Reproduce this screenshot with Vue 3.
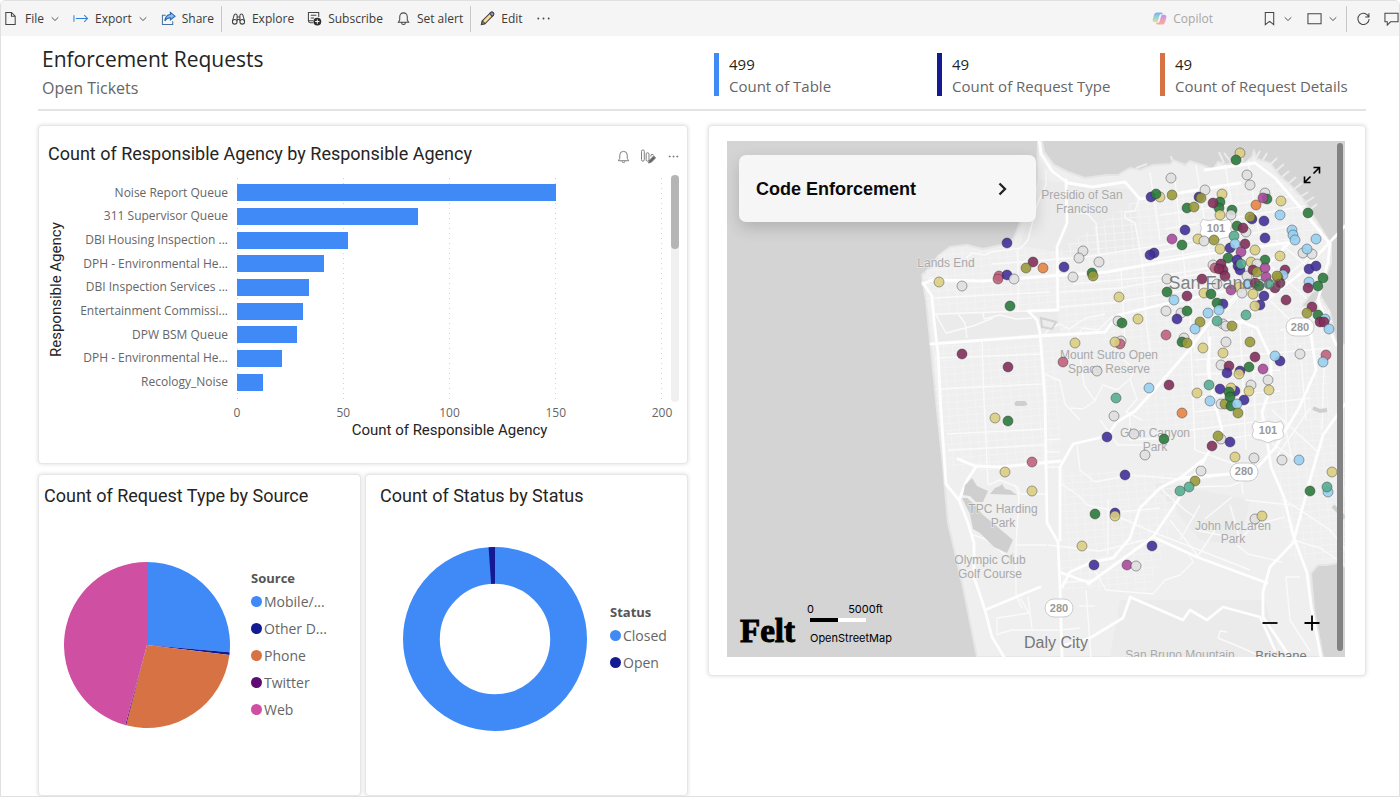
<script setup>
const kpis = [
  { value: '499', label: 'Count of Table', tone: 'blue' },
  { value: '49', label: 'Count of Request Type', tone: 'navy' },
  { value: '49', label: 'Count of Request Details', tone: 'orange' }
]

const agencies = [
  { name: 'Noise Report Queue', count: 150 },
  { name: '311 Supervisor Queue', count: 85 },
  { name: 'DBI Housing Inspection ...', count: 52 },
  { name: 'DPH - Environmental He...', count: 41 },
  { name: 'DBI Inspection Services ...', count: 34 },
  { name: 'Entertainment Commissi...', count: 31 },
  { name: 'DPW BSM Queue', count: 28 },
  { name: 'DPH - Environmental He...', count: 21 },
  { name: 'Recology_Noise', count: 12 }
]
const ticks = [0, 50, 100, 150, 200]

const sources = [
  { name: 'Mobile/...', color: '#3f8af7', from: 0, to: 95 },
  { name: 'Other D...', color: '#141b92', from: 95, to: 97 },
  { name: 'Phone', color: '#d67244', from: 97, to: 194.5 },
  { name: 'Twitter', color: '#5f0b74', from: 194.5, to: 195.2 },
  { name: 'Web', color: '#cf4fa2', from: 195.2, to: 360 }
]
const statuses = [
  { name: 'Closed', color: '#3f8af7' },
  { name: 'Open', color: '#141b92' }
]

function point(angle, radius) {
  const a = ((angle - 90) * Math.PI) / 180
  return `${(100 + radius * Math.cos(a)).toFixed(2)} ${(100 + radius * Math.sin(a)).toFixed(2)}`
}
function slice(from, to) {
  const large = to - from > 180 ? 1 : 0
  return `M100 100 L${point(from, 100)} A100 100 0 ${large} 1 ${point(to, 100)} Z`
}
function ring(from, to) {
  return `M${point(from, 100)} A100 100 0 0 1 ${point(to, 100)} L${point(to, 60)} A60 60 0 0 0 ${point(from, 60)} Z`
}

const palette = {
  n: '#42309a', y: '#dace82', w: '#dfdfdf', g: '#2b7a3c', o: '#9b9a3b', m: '#822f5a',
  t: '#58ad92', b: '#98cfef', r: '#c0627c', p: '#a74b9c', O: '#e58444'
}
const requests = `
n 1007 243,r 999 276,m 1033 262,o 1026 268,O 1043 268,r 998 279,n 1007 275,w 1014 279,y 939 282,w 962 286,g 1010 306,m 962 354,m 1008 367,
w 1171 178,n 1151 197,y 1160 197,g 1156 194,o 1172 195,n 1199 197,g 1187 208,o 1194 207,n 1185 230,p 1172 239,g 1182 245,y 1198 239,
w 1083 251,w 1079 258,w 1099 262,n 1064 267,w 1073 277,g 1092 273,o 1093 276,n 1154 253,n 1150 255,w 1167 279,g 1167 292,b 1174 300,m 1187 296,
y 1119 297,w 1166 311,w 1181 313,g 1187 311,n 1177 319,w 1118 321,g 1122 323,y 1138 319,r 1166 335,w 1184 338,g 1182 342,o 1187 343,y 1075 343,
w 1121 341,r 1120 344,y 1115 342,r 1063 362,w 1097 371,b 1149 388,m 1169 385,t 1116 398,y 1197 393,
y 1240 153,g 1236 160,w 1247 175,w 1250 185,w 1205 190,o 1201 198,y 1222 194,g 1220 202,g 1219 208,m 1213 203,g 1232 210,w 1231 215,y 1220 215,
O 1256 205,w 1265 193,g 1267 199,p 1263 198,y 1281 201,b 1280 215,g 1308 213,n 1252 219,o 1250 217,n 1264 221,w 1204 241,o 1214 240,
g 1237 226,w 1246 232,m 1243 228,t 1234 236,b 1292 230,b 1293 235,b 1295 240,b 1316 239,n 1265 238,y 1220 249,n 1230 248,b 1235 244,m 1245 244,p 1241 252,y 1255 250,
w 1303 253,w 1312 254,b 1307 249,y 1280 256,g 1228 258,n 1237 260,y 1251 262,g 1265 260,w 1213 265,r 1215 268,m 1221 264,m 1223 270,m 1219 269,m 1225 276,
n 1238 266,n 1240 270,t 1241 264,w 1257 264,w 1247 276,m 1253 270,o 1257 272,p 1265 268,p 1266 277,m 1285 270,b 1283 275,o 1278 278,m 1280 283,m 1275 288,o 1277 276,n 1309 269,n 1316 266,
m 1202 279,w 1217 284,b 1248 284,m 1255 283,g 1259 286,y 1239 287,t 1269 284,p 1231 290,w 1242 293,y 1253 294,n 1264 296,y 1204 293,g 1211 294,b 1309 282,m 1308 288,g 1323 278,g 1318 286,m 1286 300,
n 1223 304,g 1217 303,b 1208 313,b 1219 310,w 1223 324,t 1217 321,w 1226 326,o 1232 326,o 1200 322,b 1195 329,n 1260 305,y 1255 306,t 1246 315,m 1312 307,o 1307 313,g 1318 315,b 1325 319,m 1320 322,m 1324 322,b 1329 329,
w 1226 342,o 1250 342,y 1203 348,y 1223 353,m 1255 357,g 1249 367,p 1263 369,n 1280 361,b 1275 356,w 1300 354,r 1326 355,b 1323 362,w 1221 365,m 1229 366,n 1227 373,n 1240 371,y 1239 374,
t 1209 385,n 1220 389,w 1251 385,y 1249 391,w 1268 380,y 1269 390,n 1235 391,y 1231 388,g 1229 392,b 1210 401,w 1221 404,o 1225 404,g 1230 397,g 1231 406,n 1244 400,b 1237 404,
w 1114 416,O 1182 413,n 1107 437,w 1134 434,g 1164 439,w 1145 455,n 1125 475,o 1238 413,w 1221 439,o 1218 436,m 1212 446,n 1230 442,y 1235 457,w 1254 458,w 1201 471,o 1195 481,t 1189 487,t 1180 491,
w 1282 460,b 1299 460,y 1332 472,g 1310 491,b 1328 492,t 1327 487,g 1095 514,n 1115 513,y 1115 516,w 1255 519,y 1262 516,y 1082 546,n 1152 546,n 1094 565,p 1127 565,w 1136 566,
y 995 418,g 1008 421,r 1032 462,y 1005 472,y 1032 491`
  .split(',')
  .map((entry) => {
    const [tone, x, y] = entry.trim().split(' ')
    return { fill: palette[tone], x, y }
  })

const land =
  'M1042 141 L1044 152 1054 165 1068 172 1085 178 1107 175 1118 175 1130 168 1140 170 1153 165 1171 164 1173 160 1185 165 1190 161 1205 166 1213 170 1218 162 1227 165 1236 161 1245 163 1252 157 1254 151 1257 159 1270 163 1280 176 1292 187 1304 200 1314 217 1323 231 1331 244 1331 263 1325 278 1322 289 1312 292 1301 307 1310 306 1321 297 1330 312 1336 342 1345 345 V567 L1338 563 1326 565 1318 565 1311 573 1314 610 1323 657 H977 L963 587 948 523 943 467 937 410 930 340 926 300 923 283 922 275 931 267 938 256 950 247 967 245 983 249 1001 245 1013 240 1020 223 1031 205 1037 180 1038 141 Z'

const majorRoads = [
  'M923 283 L932 296 934 320 938 353 941 410 946 484 959 500 968 523 974 543 974 577 985 610 992 637 1004 657',
  'M923 284 L932 280 983 281 1050 276 1107 272 1200 255 1292 242',
  'M1039 139 L1041 154 1052 171 1068 183 1092 187 1125 182 1140 199 1155 197 1240 183',
  'M1066 180 L1067 223 1057 247 1058 310 1028 311 1037 320 1040 333 1045 400 1047 523 1058 542 1060 587 1062 657',
  'M931 344 L1040 336 1105 332 1118 315 1173 302 1245 287',
  'M1062 587 L1070 572 1092 562 1113 558 1130 538 1140 508 1160 488 1180 478 1230 474 1256 469 1275 448 1299 408 1316 370 1311 335 1296 322',
  'M1267 440 L1271 467 1284 497 1293 535 1307 573 1311 605 1321 657',
  'M1267 442 L1262 412 1271 387 1271 358 1257 328 1242 322 1218 320',
  'M1180 478 L1205 458 1222 430 1215 404 1208 370 1210 338',
  'M1060 540 V467 L1073 444 1107 436 1117 422 1135 411 1155 389 1189 350 1210 322 1290 242',
  'M1062 573 L1090 583 1088 584 1153 537 1176 503 1205 459',
  'M1153 537 L1197 557 1267 583',
  'M1293 543 L1270 567 1263 592 1263 617 1290 657',
  'M1130 597 L1183 620 1190 610 1207 620 1223 607 1260 617 1275 650',
  'M1130 598 L1123 618 1090 638 1064 645',
  'M1205 170 L1255 163 1275 178 1298 205 1318 229 1330 244',
  'M1345 226 L1329 243 1300 274 1262 303 1242 321',
  'M1040 587 L985 610 M1000 467 L1060 461 M958 459 L975 466 1000 467 M959 500 L967 480 976 467',
  'M1345 404 L1323 435 1310 480 1293 543',
  'M1330 244 L1328 262 1318 300 1336 345'
]

const minorRoads = [
  'M982 339 L984 400 988 484', 'M935 358 L1043 354', 'M940 389 L1042 384', 'M947 434 L1045 429', 'M948 450 L1046 445',
  'M935 314 L1027 311', 'M935 298 L1050 292', 'M992 264 L1085 257 1200 239', 'M1018 248 L1018 312', 'M966 258 L972 253 985 255 991 252 1007 250 1021 248 1028 240 1037 205 1046 185 1046 170',
  'M1060 292 L1120 288 1210 272', 'M1060 307 L1118 302 1215 285', 'M1073 284 L1160 276 1245 262', 'M1150 253 L1290 226', 'M1145 261 L1240 245',
  'M1139 199 L1135 211 1125 212 1125 218 1135 223 1142 261 1146 320 1150 352', 'M1121 269 L1125 341', 'M1100 262 L1096 223 1088 214 1074 212',
  'M1175 180 L1188 300 1195 352', 'M1196 165 L1220 320', 'M1225 165 L1238 240', 'M1248 160 L1258 230', 'M1150 172 L1160 240', 'M1160 215 L1292 196', 'M1165 229 L1305 206',
  'M1190 320 L1195 450', 'M1208 330 L1212 400', 'M1240 325 L1246 450', 'M1252 330 L1256 440', 'M1195 360 L1330 348', 'M1195 375 L1280 370', 'M1192 398 L1280 391', 'M1194 412 L1310 398', 'M1190 430 L1262 421',
  'M1285 330 L1286 430 1292 460', 'M1300 345 L1306 420', 'M1324 362 L1322 430', 'M1280 330 L1336 320', 'M1272 410 L1318 452', 'M1310 408 L1277 456', 'M1272 443 L1300 463',
  'M1240 325 L1290 275', 'M1225 312 L1270 260', 'M1250 305 L1315 253', 'M1262 258 L1314 305', 'M1244 275 L1290 320', 'M1276 240 L1330 285',
  'M1075 343 L1082 328 1098 330 1113 316', 'M1043 336 L1049 329 1060 324 1069 329 1086 318 1105 314',
  'M1080 355 L1084 385 1095 401 1083 409 1070 408', 'M1095 400 L1103 385 1117 390 1130 379 1135 370 1120 357', 'M1130 379 L1137 399 1126 412 1142 420', 'M1045 374 L1060 381 1065 404 1080 420',
  'M1077 445 L1080 470 1095 482 1130 475 1190 480 1256 470', 'M1060 483 L1078 495 1087 505 1120 512 1160 508', 'M1048 545 L1100 551 1145 540', 'M1108 499 L1108 555',
  'M1160 488 L1185 510 1195 517', 'M1108 512 L1148 530 1250 570', 'M1180 487 L1230 486 1250 478', 'M1195 530 L1240 539 1255 525 1285 517', 'M1237 545 L1248 554 1282 562', 'M1285 500 L1330 530 1345 549', 'M1293 540 L1320 548 1345 565',
  'M1090 562 L1106 590 1153 594 1165 580 1180 575 1193 562 1188 553', 'M1286 577 H1300 M1286 577 L1290 620 1310 651', 'M1086 590 L1091 657', 'M1062 583 L1092 580', 'M1079 606 H1095 M1060 630 L1080 628',
  'M1015 485 L1019 496 1016 545 1016 595 1022 608 M1016 545 L1047 545', 'M998 634 L1012 630 1061 630', 'M997 636 L997 618 1029 613 1020 598 M1028 596 L1032 629', 'M1020 494 L1048 494 M988 485 L1000 480 1018 487 1020 494',
  'M936 315 L946 333 973 326 993 318 M958 314 L965 323 967 338', 'M983 312 L984 319 1000 315 1016 319 1032 318', 'M973 535 L985 539 1008 557',
  'M1060 439 L1045 440 M1060 467 L1047 467 M1060 452 L1045 452', 'M1100 420 L1118 445 1158 445', 'M1130 414 L1130 440 1170 438', 'M1222 440 L1262 433', 'M1195 450 L1240 466 1243 494', 'M1232 497 L1205 519',
  'M1218 638 L1220 631 1227 632 M1218 638 L1240 647 1262 657', 'M1245 500 L1290 505 M1230 505 L1240 540', 'M1200 505 L1180 540 M1170 520 L1198 556 1215 530'
]

const piers = 'M1256 158 L1260 151 M1263 160 L1267 153 M1270 165 L1277 158 M1276 171 L1284 164 M1282 177 L1289 171 M1288 184 L1296 177 M1293 190 L1302 183 M1300 197 L1308 192 M1303 204 L1314 197 M1308 211 L1317 204 M1224 163 L1219 152 M1231 162 L1224 153 M1243 161 L1240 152 M1136 168 L1147 164 M1172 160 L1171 156'
</script>

<template>
  <div class="page">
    <header class="toolbar">
      <button class="tool menu" type="button">
        <svg class="icon" viewBox="0 0 16 16"><path d="M3 1.500h6l4 4V14.500H3z M9 1.500v4h4" /></svg>File
        <svg class="chevron" viewBox="0 0 8 8"><path d="M.7 2.300 4 5.500 7.300 2.300" /></svg>
      </button>
      <button class="tool menu" type="button">
        <svg class="icon blue" viewBox="0 0 16 16"><path d="M1 4.500v7M3 8h12.500M12 4.500 15.500 8 12 11.500" /></svg>Export
        <svg class="chevron" viewBox="0 0 8 8"><path d="M.7 2.300 4 5.500 7.300 2.300" /></svg>
      </button>
      <button class="tool" type="button">
        <svg class="icon" viewBox="0 0 16 16"><path class="blue" d="M5 4.500H1.500v10h11V11" /><path class="share-arrow" d="M10 1.500 15 5.500 10 9.500V7.300C7.500 7.300 5.500 8.300 4 10.500 4.500 6.500 6.500 4 10 3.700z" /></svg>Share
      </button>
      <span class="divider"></span>
      <button class="tool" type="button">
        <svg class="icon" viewBox="0 0 16 16"><path d="M1.500 11 3.300 4.500c.3-1.800 3-1.800 3.200 0V11M14.500 11l-1.800-6.500c-.3-1.800-3-1.800-3.200 0V11M6.500 6.500h3M6.500 9h3" /><circle cx="4" cy="11.500" r="2.500" /><circle cx="12" cy="11.500" r="2.500" /></svg>Explore
      </button>
      <button class="tool" type="button">
        <svg class="icon" viewBox="0 0 16 16"><path d="M6.500 12.500H3.500a2 2 0 0 1-2-2V1.500h11v5M4 4.500h6M4 7.500h3.500M1.500 10.500h5" /><circle class="solid" cx="11" cy="11.300" r="4.200" /><path class="cut" d="M11 9v4.600M8.700 11.300h4.600" /></svg>Subscribe
      </button>
      <button class="tool" type="button">
        <svg class="icon" viewBox="0 0 16 16"><path d="M2.500 12h11L12 9.500V6a4 4 0 0 0-8 0v3.500zM6 12.500a2 2 0 0 0 4 0" /></svg>Set alert
      </button>
      <span class="divider"></span>
      <button class="tool" type="button">
        <svg class="icon" viewBox="0 0 16 16"><path class="pencil" d="M1.500 14.500l1-4L11.500 1.500q1.500-.8 2.500.3t.3 2.700L5.500 13.500z" /><path class="eraser" d="M10.200 2.800 11.700 1.300q1.500-.6 2.500.4t.3 2.600L13 5.800z" /><path d="M1.500 14.500l1-4 3 3z" /></svg>Edit
      </button>
      <button class="tool" type="button" aria-label="More options">
        <svg class="icon fill" viewBox="0 0 16 16"><circle cx="2.500" cy="8" r="1" /><circle cx="8" cy="8" r="1" /><circle cx="13.500" cy="8" r="1" /></svg>
      </button>
      <span class="spacer"></span>
      <button class="tool copilot" type="button" disabled>
        <svg class="icon" viewBox="0 0 16 16">
          <defs>
            <linearGradient id="cp-a" x1="0" y1="0" x2="0" y2="1"><stop offset="0" stop-color="#86a8f0" /><stop offset=".5" stop-color="#8fd8d8" /><stop offset="1" stop-color="#f2d98c" /></linearGradient>
            <linearGradient id="cp-b" x1="0" y1="0" x2="0" y2="1"><stop offset="0" stop-color="#b49cf0" /><stop offset=".5" stop-color="#ee9cc4" /><stop offset="1" stop-color="#f5b08c" /></linearGradient>
          </defs>
          <path fill="url(#cp-a)" stroke="none" d="M5 1.500h5c1 0 1.300 1 1.700 2H10c-1.200 0-1.800.6-2.100 1.600L6.500 10c-.4 1.300-1 2-2.200 2H3c-2 0-2.700-1.500-2.200-3.500l1.200-4C2.600 2.500 3.400 1.500 5 1.500z" />
          <path fill="url(#cp-b)" stroke="none" d="M11 14.500H6c-1 0-1.300-1-1.700-2H6c1.200 0 1.800-.6 2.100-1.600L9.500 6c.4-1.300 1-2 2.200-2H13c2 0 2.700 1.500 2.200 3.500l-1.200 4c-.6 2-1.400 3-3 3z" />
        </svg>Copilot
      </button>
      <button class="tool pair" type="button" aria-label="Bookmarks">
        <svg class="icon" viewBox="0 0 16 16"><path d="M3.500 1.500h9v13L8 11l-4.500 3.500z" /></svg>
        <svg class="chevron" viewBox="0 0 8 8"><path d="M.7 2.300 4 5.500 7.300 2.300" /></svg>
      </button>
      <button class="tool pair" type="button" aria-label="View">
        <svg class="icon" viewBox="0 0 16 16"><path d="M1 3h14v10.500H1z" /></svg>
        <svg class="chevron" viewBox="0 0 8 8"><path d="M.7 2.300 4 5.500 7.300 2.300" /></svg>
      </button>
      <span class="divider"></span>
      <button class="tool" type="button" aria-label="Refresh">
        <svg class="icon" viewBox="0 0 16 16"><path d="M13.700 6.500A6 6 0 1 0 14 8.500M13.800 2.500v4h-4" /></svg>
      </button>
      <button class="tool last" type="button" aria-label="Comment">
        <svg class="icon" viewBox="0 0 16 16"><path d="M1 2.500h14v9H7L3.500 15v-3.500H1z" /></svg>
      </button>
    </header>

    <main class="report">
      <section class="heading">
        <div class="titles">
          <h1>Enforcement Requests</h1>
          <p>Open Tickets</p>
        </div>
        <div class="kpis">
          <div v-for="kpi in kpis" :key="kpi.label" class="kpi" :class="kpi.tone">
            <strong>{{ kpi.value }}</strong>
            <span>{{ kpi.label }}</span>
          </div>
        </div>
      </section>

      <section class="board">
        <div class="left">
          <article class="card agency">
            <div class="card-head">
              <h2>Count of Responsible Agency by Responsible Agency</h2>
              <div class="actions">
                <button type="button" aria-label="Set alert"><svg viewBox="0 0 16 16"><path d="M2.500 12.500h11L12 10V6.500a4 4 0 0 0-8 0V10zM6.500 13a1.500 1.500 0 0 0 3 0" /></svg></button>
                <button type="button" aria-label="Personalize visual"><svg viewBox="0 0 16 16"><rect x=".5" y="1" width="3" height="12" rx="1.500" /><rect x="5.500" y="4" width="3" height="9" rx="1.500" /><path d="M10.500 8V7.500a1.500 1.500 0 0 1 3-.5" /><path class="dark" d="M8 15l1-3 4.500-4.500 2 2L11 14z" /></svg></button>
                <button type="button" aria-label="More options"><svg viewBox="0 0 16 16"><g class="dark"><circle cx="4" cy="8" r=".6" /><circle cx="8" cy="8" r=".6" /><circle cx="12" cy="8" r=".6" /></g></svg></button>
              </div>
            </div>
            <div class="chart">
              <div class="y-title">Responsible Agency</div>
              <ul class="names">
                <li v-for="(row, i) in agencies" :key="i">{{ row.name }}</li>
              </ul>
              <div class="plot">
                <div class="lines"><i v-for="tick in ticks" :key="tick"></i></div>
                <div v-for="(row, i) in agencies" :key="i" class="track">
                  <div class="bar" :style="{ width: row.count / 2 + '%' }"></div>
                </div>
              </div>
              <div class="scroll"><i></i></div>
              <div class="ticks"><span v-for="tick in ticks" :key="tick">{{ tick }}</span></div>
              <div class="x-title">Count of Responsible Agency</div>
            </div>
          </article>

          <article class="card round source">
            <h2>Count of Request Type by Source</h2>
            <div class="round-body">
              <svg class="pie" viewBox="0 0 200 200" role="img" aria-label="Requests by source">
                <path v-for="s in sources" :key="s.name" :d="slice(s.from, s.to)" :fill="s.color" />
              </svg>
              <div class="legend">
                <h3>Source</h3>
                <ul>
                  <li v-for="s in sources" :key="s.name">
                    <svg viewBox="0 0 10 10"><circle cx="5" cy="5" r="5" :fill="s.color" /></svg>{{ s.name }}
                  </li>
                </ul>
              </div>
            </div>
          </article>

          <article class="card round status">
            <h2>Count of Status by Status</h2>
            <div class="round-body">
              <svg class="donut" viewBox="0 0 200 200" role="img" aria-label="Requests by status">
                <circle cx="100" cy="100" r="80" fill="none" stroke="#3f8af7" stroke-width="40" />
                <path :d="ring(356, 360)" fill="#141b92" />
              </svg>
              <div class="legend">
                <h3>Status</h3>
                <ul>
                  <li v-for="s in statuses" :key="s.name">
                    <svg viewBox="0 0 10 10"><circle cx="5" cy="5" r="5" :fill="s.color" /></svg>{{ s.name }}
                  </li>
                </ul>
              </div>
            </div>
          </article>
        </div>

        <article class="card map-card">
          <div class="map">
            <svg class="canvas" viewBox="727 141 618 516" role="img" aria-label="Map of San Francisco requests">
              <defs>
                <clipPath id="land-clip"><path :d="land" /></clipPath>
                <pattern id="blocks" width="9" height="7" patternUnits="userSpaceOnUse" patternTransform="rotate(-5)">
                  <path d="M0 .5h9M.5 0v7" class="block-line" />
                </pattern>
              </defs>
              <path :d="land" class="land" />
              <g clip-path="url(#land-clip)">
                <path class="park" d="M933 316 L1058 310 1060 332 935 342Z M1040 180 L1135 190 1138 250 1070 255 1020 245Z M1150 480 L1250 500 1240 545 1200 540Z M1120 600 L1265 600 1280 657 1110 657Z" />
                <path class="blocks" d="M923 250 H1060 V310 H923Z M1060 250 L1150 190 1330 180 V440 H1140 V340 H1060Z M935 345 H1060 V470 H935Z M1060 470 H1190 L1150 590 H1062Z M1270 440 H1345 V560 H1290Z" />
                <path v-for="d in minorRoads" :key="d" :d="d" class="minor" />
              </g>
              <path :d="piers" class="pier" />
              <path v-for="d in majorRoads" :key="d" :d="d" class="major" />
              <path class="lake" d="M972 478 L977 486 988 491 983 502 976 502 970 496 963 495 965 485Z M990 494 L995 488 1000 486 1002 484 1005 489 1010 490 1017 495Z M962 498 L967 498 975 505 982 514 1013 540 1007 553 994 547 980 533 973 529 970 514Z M1008 557 L1013 553 1014 565Z M1016 401h9l2 2v2l-3 1h-8l-2-2z" />
              <path class="inlet" d="M1041 318 L1056 322 1052 329 1042 327Z" />
              <path class="cove" d="M1313 408 L1320 411 1327 410 M1333 506 L1345 518" />

              <g class="place">
                <text x="1082" y="199">Presidio of San</text>
                <text x="1082" y="213">Francisco</text>
                <text x="946" y="267">Lands End</text>
                <text x="1109" y="359">Mount Sutro Open</text>
                <text x="1109" y="373">Space Reserve</text>
                <text x="1155" y="437">Glen Canyon</text>
                <text x="1155" y="451">Park</text>
                <text x="1003" y="513">TPC Harding</text>
                <text x="1003" y="527">Park</text>
                <text x="990" y="564">Olympic Club</text>
                <text x="990" y="578">Golf Course</text>
                <text x="1233" y="530">John McLaren</text>
                <text x="1233" y="543">Park</text>
                <text x="1180" y="659">San Bruno Mountain</text>
              </g>
              <text x="1056" y="648" class="town">Daly City</text>
              <text x="1281" y="660" class="town small">Brisbane</text>
              <g class="shield">
                <path d="M1203 219 q5 3 13 0 q8 3 13 0 l3 5 q-3 5 0 9 q-2 5-9 5 l-7 3 -7-3 q-8 0-9-5 q3-5 0-9z" />
                <path d="M1255 421 q5 3 13 0 q8 3 13 0 l3 5 q-3 5 0 9 q-2 5-9 5 l-7 3 -7-3 q-8 0-9-5 q3-5 0-9z" />
                <rect x="1286" y="318" width="28" height="18" rx="9" />
                <rect x="1230" y="463" width="28" height="18" rx="9" />
                <rect x="1045" y="599" width="28" height="18" rx="9" />
                <text x="1216" y="232">101</text>
                <text x="1268" y="434">101</text>
                <text x="1300" y="331">280</text>
                <text x="1244" y="475">280</text>
                <text x="1059" y="612">280</text>
              </g>
              <circle v-for="(r, i) in requests" :key="i" :cx="r.x" :cy="r.y" r="5" :fill="r.fill" class="dot" />
              <text x="1226" y="289" class="city">San Francisco</text>
            </svg>

            <button class="layer" type="button">
              <span>Code Enforcement</span>
              <svg viewBox="0 0 16 16"><path d="M5.500 2.500 11 8l-5.500 5.500" /></svg>
            </button>
            <button class="expand" type="button" aria-label="Full screen">
              <svg viewBox="0 0 18 18"><path d="M10.500 7.500 16 2M10.500 1.500H16.500V7.500M7.500 10.500 2 16M1.500 10.500V16.500H7.500" /></svg>
            </button>
            <div class="credit">
              <span class="felt">Felt</span>
              <div class="scale">
                <div class="scale-text"><span>0</span><span>5000ft</span></div>
                <div class="scale-bar"></div>
                <a href="#">OpenStreetMap</a>
              </div>
            </div>
            <div class="zoom">
              <button type="button" aria-label="Zoom out"><svg viewBox="0 0 16 16"><path d="M.5 8h15" /></svg></button>
              <button type="button" aria-label="Zoom in"><svg viewBox="0 0 16 16"><path d="M.5 8h15M8 .5v15" /></svg></button>
            </div>
            <div class="map-scroll"></div>
          </div>
        </article>
      </section>
    </main>
  </div>
</template>

<style>
body { background: #fff; }
</style>

<style scoped>
* { box-sizing: border-box; }
button { border: 0; padding: 0; background: none; color: inherit; font: inherit; }
h1, h2, h3, p, ul { margin: 0; padding: 0; font-weight: 400; }
ul { list-style: none; }

.page {
  border: 1px solid #e0e0e0;
  border-radius: 5px 5px 0 0;
  overflow: hidden;
  font-family: "Open Sans", "Noto Sans", sans-serif;
  color: #252423;
}

.toolbar { display: flex; align-items: center; height: 35px; background: #f5f5f5; font-size: 12px; color: #3b3a39; }
.tool { display: flex; align-items: center; gap: 6px; padding: 0 6px 0 2px; margin-right: 5px; white-space: nowrap; }
.tool.menu { gap: 7px; margin-right: 6px; }
.tool.last { padding-right: 0; margin-right: 0; }
.icon { width: 15px; height: 15px; fill: none; stroke: #444; stroke-width: 1.1; flex: none; }
.icon.blue { stroke: #2f7fd6; }
.icon .blue { stroke: #4a6f9c; }
.icon.fill { fill: #444; stroke: none; }
.share-arrow { fill: #86bbf3; stroke: #2866b0; }
.solid { fill: #2e2e2e; stroke: none; }
.cut { stroke: #f5f5f5; }
.pencil { fill: #fbdc9a; }
.eraser { fill: #9d8bc4; }
.chevron { width: 8px; height: 8px; fill: none; stroke: #555; }
.divider { width: 1px; height: 26px; background: #c8c8c8; margin: 0 7px 0 -4px; }
.spacer { flex: 1; }
.copilot { color: #a6a6a6; margin-right: 41px; }
.tool.pair { gap: 7px; padding-right: 8px; }

.report { padding: 17px 33px 0 37px; }
.heading { display: grid; grid-template-columns: 676fr 652fr; border-bottom: 2px solid #e3e3e3; height: 58px; }
.titles { padding-left: 4px; }
h1 { font-size: 21px; line-height: 28px; margin-top: -8px; }
.titles p { font-size: 16px; line-height: 28px; color: #666; margin-top: 1px; }
.kpis { display: grid; grid-template-columns: 223fr 223fr 206fr; align-items: start; }
.kpi { border-left: 5px solid; padding-left: 10px; height: 43px; display: flex; flex-direction: column; white-space: nowrap; }
.kpi strong { font-weight: 400; font-size: 15px; line-height: 22px; color: #252423; }
.kpi span { font-size: 15px; line-height: 22px; color: #666; }
.kpi.blue { border-color: #3f8af7; }
.kpi.navy { border-color: #141b92; }
.kpi.orange { border-color: #d67244; }

.board { display: grid; grid-template-columns: 650fr 658fr; gap: 20px; align-items: start; margin-top: 14px; }
.left { display: grid; grid-template-columns: 1fr 1fr; gap: 10px 4px; }
.card { background: #fff; border: 1px solid #e6e6e6; border-radius: 4px; box-shadow: 0 0 4px rgba(0, 0, 0, 0.14); min-width: 0; }
h2 { font-family: Roboto, sans-serif; font-size: 18px; line-height: 20px; white-space: nowrap; }

.agency { grid-column: 1 / -1; height: 339px; padding: 18px 8px 0 9px; }
.card-head { display: flex; justify-content: space-between; height: 34px; }
.actions { display: flex; gap: 10px; padding-top: 4px; height: 20px; margin-right: -2px; }
.actions svg { display: block; width: 15px; height: 15px; fill: none; stroke: #777; }
.actions .dark { fill: #666; }
.chart { display: grid; grid-template-columns: 16px 155px 1fr 8px; grid-template-rows: 224px 22px 20px; column-gap: 9px; }
.y-title { writing-mode: vertical-rl; transform: rotate(180deg); text-align: center; font: 15px/16px Roboto, sans-serif; }
.names, .plot { display: grid; grid-auto-rows: 1fr; align-items: center; padding: 3px 0 8px; }
.names { font-size: 12px; text-align: right; color: #666; white-space: nowrap; line-height: 18px; }
.plot { position: relative; }
.lines { position: absolute; inset: 0; display: flex; justify-content: space-between; }
.lines i { width: 1px; background: repeating-linear-gradient(#d2d2d2 0 1px, transparent 1px 5px); }
.track { position: relative; }
.bar { height: 17px; background: #3f8af7; }
.scroll { background: #f0f0f0; border-radius: 4px; margin-top: -3px; }
.scroll i { display: block; height: 74px; background: #b5b5b5; border-radius: 4px; }
.ticks { grid-column: 3; display: flex; justify-content: space-between; font-size: 12px; line-height: 22px; color: #666; }
.ticks span { width: 0; display: flex; justify-content: center; }
.x-title { grid-column: 3; text-align: center; font: 15px/12px Roboto, sans-serif; }

.round { height: 322px; padding: 11px 4px 0 5px; }
.status { padding-left: 14px; }
.round-body { display: flex; align-items: center; height: 166px; margin-top: 56px; }
.status .round-body { margin-top: 50px; }
.pie { width: 166px; height: 166px; margin-left: 20px; }
.donut { width: 184px; height: 184px; margin-left: 23px; }
.legend { margin-left: 21px; font-size: 14px; color: #666; white-space: nowrap; }
.status .legend { margin-left: 23px; }
.legend h3 { font-size: 13px; line-height: 20px; font-weight: 700; color: #555; }
.legend li { display: flex; align-items: center; gap: 2px; line-height: 27px; }
.legend li svg { width: 11px; height: 11px; }

.map-card { padding: 15px 20px 18px 18px; }
.map { position: relative; overflow: hidden; background: #d4d4d4; }
.canvas { display: block; width: 100%; height: auto; }
.land { fill: #efefef; stroke: #e6e6e6; stroke-width: 2; }
.park { fill: #ebebeb; }
.blocks { fill: url(#blocks); }
.block-line { fill: none; stroke: #f3f3f3; stroke-width: 1; }
.minor { fill: none; stroke: #fafafa; stroke-width: 1.400; stroke-linejoin: round; }
.major { fill: none; stroke: #fefefe; stroke-width: 2.800; stroke-linejoin: round; stroke-linecap: round; }
.pier { fill: none; stroke: #ebebeb; stroke-width: 2; }
.lake { fill: #cfcfcf; }
.inlet { fill: #ececec; stroke: #d2d2d2; stroke-width: 2; }
.cove { fill: none; stroke: #cfcfcf; stroke-width: 4; }
.canvas text { font-family: "Liberation Sans", Arial, sans-serif; text-anchor: middle; }
.place { font-size: 12px; fill: #a9a9a9; paint-order: stroke; stroke: #efefef; stroke-width: 1px; }
.town { font-size: 16px; fill: #777; }
.town.small { font-size: 13px; }
.city { font-size: 18px; fill: #6c6c6c; fill-opacity: 0.85; }
.shield path, .shield rect { fill: #fff; stroke: #ccc; }
.shield text { font-size: 11px; font-weight: 700; fill: #999; }
.dot { stroke: rgba(40, 40, 40, 0.4); stroke-width: 1; fill-opacity: 0.9; }

.layer {
  position: absolute; left: 12px; top: 14px; width: 48%; height: 67px; padding: 0 26px 0 17px;
  display: flex; align-items: center; justify-content: space-between;
  background: #f6f6f6; border-radius: 7px; box-shadow: 0 6px 16px rgba(0, 0, 0, 0.16);
  font: 700 18px/24px "Liberation Sans", Arial, sans-serif; color: #0a0a0a;
}
.layer svg { width: 16px; height: 16px; fill: none; stroke: #222; stroke-width: 2.300; }
.expand { position: absolute; right: 24px; top: 25px; }
.expand svg { display: block; width: 18px; height: 18px; fill: none; stroke: #000; stroke-width: 1.600; }
.credit { position: absolute; left: 13px; bottom: 12px; display: flex; align-items: flex-end; gap: 15px; color: #000; }
.felt { font: 700 33px/28px "Liberation Serif", serif; -webkit-text-stroke: 1px #000; }
.scale { font: 11px/14px Inter, sans-serif; }
.scale-text { display: flex; justify-content: space-between; width: 76px; margin-left: -3px; }
.scale-bar { width: 56px; height: 4px; margin: 2px 0 9px; background: linear-gradient(90deg, #000 50%, #fff 50%); }
.scale a { display: block; color: inherit; text-decoration: none; }
.zoom { position: absolute; right: 25px; bottom: 26px; display: flex; gap: 26px; }
.zoom svg { display: block; width: 16px; height: 16px; fill: none; stroke: #000; stroke-width: 1.800; }
.map-scroll { position: absolute; right: 2px; top: 2px; bottom: 6px; width: 6px; border-radius: 3px; background: #828282; }
</style>
